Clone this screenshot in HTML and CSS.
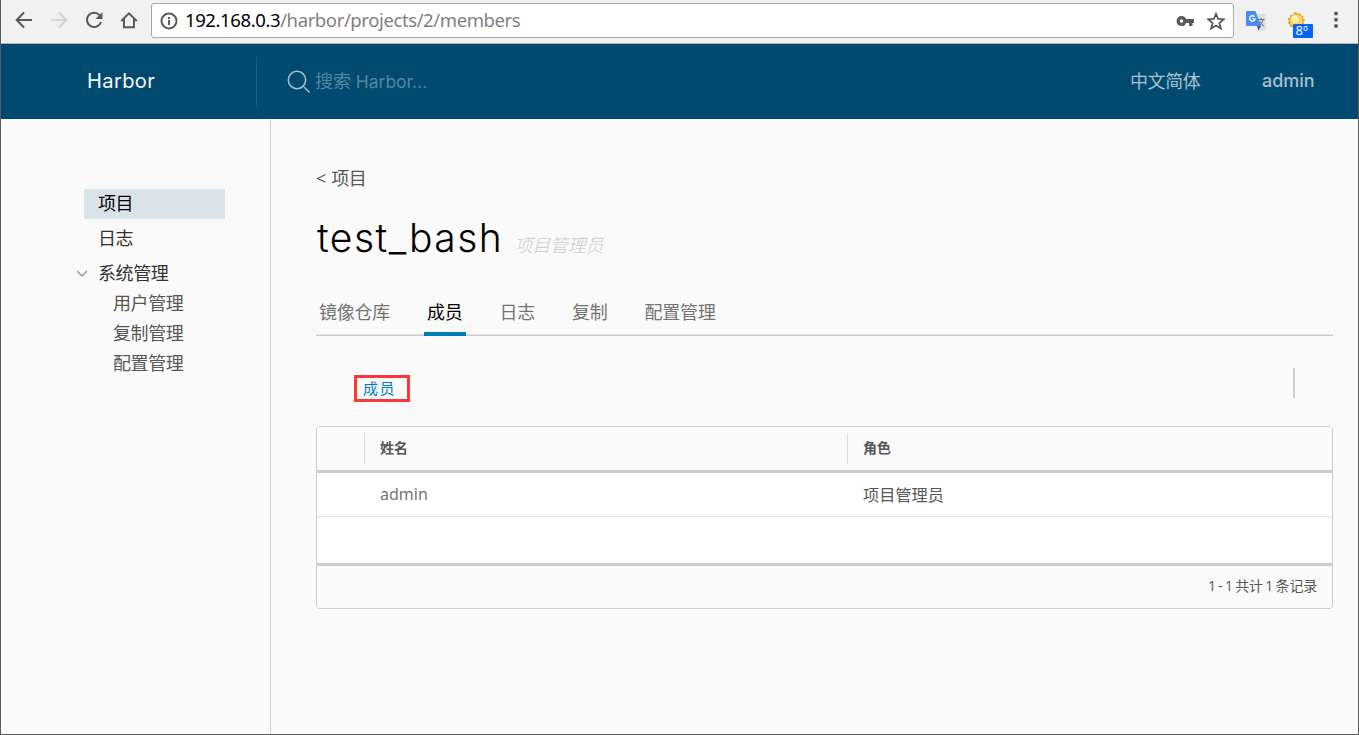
FILE: index.html
```html
<!DOCTYPE html>
<html lang="zh-CN">
<head>
<meta charset="utf-8">
<title>Harbor</title>
<link rel="stylesheet" href="styles.css">
</head>
<body>
<div class="window">
  <div class="toolbar">
    <div class="nav-icons">
      <svg width="18" height="18" viewBox="0 0 18 18" class="icon"><path d="M17 9H2M9 1.500L1.700 9L9 16.500"/></svg>
      <svg width="18" height="18" viewBox="0 0 18 18" class="icon disabled"><path d="M1 9h15M9 1.500L16.300 9L9 16.500"/></svg>
      <svg width="18" height="18" viewBox="0 0 18 18" class="icon"><path d="M14.600 4.200A7.200 7.200 0 1 0 16 11"/><path class="solid" d="M17.500 1v7h-7z"/></svg>
      <svg width="18" height="18" viewBox="0 0 18 18" class="icon"><path d="M1.200 10L9 2.300L16.800 10M4 8v8.200h10V8"/></svg>
    </div>
    <div class="address">
      <svg width="18" height="18" viewBox="0 0 18 18" class="icon info"><circle cx="9" cy="9" r="7.500"/><path d="M9 8v5M9 5v2"/></svg>
      <span class="url"><span class="host">192.168.0.3</span>/harbor/projects/2/members</span>
      <svg width="18" height="12" viewBox="0 0 18 12" class="key"><path fill-rule="evenodd" d="M5.500 1a5 5 0 1 0 4.700 7H13v3h3.500V8H18V4h-7.800A5 5 0 0 0 5.500 1zM5.500 4.300a1.700 1.700 0 1 1 0 3.400a1.700 1.700 0 0 1 0-3.400z"/></svg>
      <svg width="18" height="18" viewBox="0 0 18 18" class="icon star"><path d="M9 1.800l2.100 5.200l5.600.4l-4.300 3.600l1.400 5.500L9 13.500l-4.800 3l1.400-5.500L1.300 7.400l5.600-.4z"/></svg>
    </div>
    <svg width="20" height="21" viewBox="0 0 20 21" class="translate">
      <path d="M9 4h9.500q1 0 1 1v14.500q0 1-1 1H13z" fill="#dedede"/>
      <path d="M12 9.500h6.500M15 8v1.500M17 10q-1 4-4 6M13.500 11q2 4 4.500 5" fill="none" stroke="#5c7485"/>
      <path d="M11 16h4l-2.500 4.500z" fill="#3b51b5"/>
      <path d="M1 1h8.500L15 16H1q-1 0-1-1V2q0-1 1-1z" fill="#4b8bf4"/>
      <path d="M8.400 6.700A2.700 2.700 0 1 0 9 8.900H6.400" fill="none" stroke="#fff" stroke-width="1.400"/>
    </svg>
    <svg width="26" height="27" viewBox="0 0 26 27" class="weather">
      <path d="M9 0l1.500 2L13 1l.8 2.300L16.300 4l-.5 2.300L18 8l-1.500 2l.5 2.500l-2.500.8L13 16l-2.500-.8L8 17l-1.800-1.900L3.600 15L3 12.500L.8 11L2 9L.8 6.600L3 5.500L3.600 3L6 3L7 1z" fill="#e89b25"/>
      <circle cx="9.300" cy="8.700" r="6.400" fill="#ffd65c"/><circle cx="8" cy="7" r="3.700" fill="#fff0a5"/>
      <rect x="6" y="12" width="20" height="14" rx="1" fill="#0563ff"/>
      <text x="8.500" y="23.300">8º</text>
    </svg>
    <svg width="4" height="18" viewBox="0 0 4 18" class="more"><circle cx="2" cy="2.500" r="2"/><circle cx="2" cy="8.700" r="2"/><circle cx="2" cy="15" r="2"/></svg>
  </div>
  <header class="header">
    <div class="brand">Harbor</div>
    <div class="search">
      <svg width="24" height="24" viewBox="0 0 24 24"><circle cx="10" cy="10" r="8.700"/><path d="M17 17l5.500 5.500"/></svg>
      <span class="hint">搜索 <span class="product">Harbor...</span></span>
    </div>
    <div class="language">中文简体</div>
    <div class="user">admin</div>
  </header>
  <div class="body">
    <nav class="sidebar">
      <a class="item active">项目</a>
      <a class="item">日志</a>
      <a class="item group"><svg width="12" height="8" viewBox="0 0 12 8"><path d="M1 1l5 5l5-5"/></svg>系统管理</a>
      <a class="sub">用户管理</a>
      <a class="sub">复制管理</a>
      <a class="sub">配置管理</a>
    </nav>
    <main class="main">
      <a class="back">&lt; 项目</a>
      <div class="title"><h1>test_bash</h1><em>项目管理员</em></div>
      <div class="tabs">
        <a class="tab">镜像仓库</a><a class="tab current">成员</a><a class="tab">日志</a><a class="tab">复制</a><a class="tab">配置管理</a>
      </div>
      <div class="actions"><a class="add">成员</a><i class="divider"></i></div>
      <div class="grid">
        <div class="row head"><span class="cell"></span><span class="cell">姓名</span><span class="cell">角色</span></div>
        <div class="row"><span class="cell"></span><span class="cell name">admin</span><span class="cell">项目管理员</span></div>
        <div class="blank"></div>
        <div class="foot">1 - 1 共计 1 条记录</div>
      </div>
    </main>
  </div>
</div>
</body>
</html>
```
FILE: styles.css
```css
* { box-sizing: border-box; }
body { margin: 0; font-family: "Open Sans", "Noto Sans CJK SC", sans-serif; color: #565656; }
.window { width: 1359px; height: 735px; display: flex; flex-direction: column; overflow: hidden; background: #fafafa; border: 1px solid #5b5b5b; border-top: 0; }

.toolbar { height: 44px; flex: none; display: flex; align-items: flex-start; background: #f1f1f1; border-bottom: 1px solid #b6b4b4; }
.nav-icons { display: flex; gap: 17px; padding: 11px 0 0 14px; width: 150px; flex: none; }
.icon { fill: none; stroke: #5a5a5a; stroke-width: 2; flex: none; }
.icon .solid { fill: #5a5a5a; stroke: none; }
.disabled { stroke: #d4d4d4; }
.address { margin-top: 3px; width: 1083px; height: 35px; flex: none; display: flex; align-items: center; padding: 0 8px; background: #fff; border: 1px solid #a9a9a9; border-radius: 3px; }
.url { flex: 1; margin-left: 7px; padding-bottom: 2px; font: 18.500px/30px "Noto Sans", sans-serif; letter-spacing: -.4px; color: #808080; }
.host { color: #000; }
.key { fill: #5a5a5a; margin-right: 13px; }
.star { stroke-width: 1.800; }
.translate { margin: 10px 0 0 12px; }
.weather { margin: 12px 0 0 21px; }
.weather text { font: 13px "Noto Sans", sans-serif; fill: #fff; }
.more { margin: 11px 0 0 21px; fill: #5a5a5a; }

.header { height: 75px; flex: none; display: flex; align-items: center; background: #004a70; color: #a7c0ce; font-size: 18px; }
.brand { width: 256px; height: 50px; padding-left: 86px; line-height: 48px; font-family: Inter, sans-serif; font-size: 20px; letter-spacing: .4px; color: #fafafa; border-right: 1px solid #1c5e80; }
.search { flex: 1; display: flex; align-items: center; gap: 4px; padding-left: 30px; color: #5386a0; }
.search svg { fill: none; stroke: #a7c0ce; stroke-width: 1.500; }
.hint { padding-bottom: 4px; }
.product { font-family: Inter, sans-serif; font-size: 17.500px; }
.language { width: 132px; padding-bottom: 4px; letter-spacing: -.4px; }
.user { width: 96px; padding-bottom: 2px; font: 500 18px Inter, sans-serif; }

.body { flex: 1; display: flex; }
.sidebar { width: 270px; border-right: 1px solid #ccc; padding: 70px 45px 0 83px; font-size: 18px; letter-spacing: -.4px; display: flex; flex-direction: column; }
.item { height: 30px; line-height: 28px; padding-left: 14px; margin-bottom: 5px; color: #313131; }
.active { background: #d9e4ea; color: #000; border-radius: 3px 0 0 3px; }
.group { line-height: 28px; margin: 0 0 0 -8px; padding: 0 0 2px; display: flex; align-items: center; gap: 10px; }
.group svg { fill: none; stroke: #9a9a9a; stroke-width: 1.500; margin-top: 2px; }
.sub { height: 30px; line-height: 28px; padding-left: 29px; }

.main { flex: 1; padding: 46px 25px 0 45px; font-size: 18px; letter-spacing: -.4px; display: flex; flex-direction: column; }
.back { line-height: 26px; height: 26px; word-spacing: 1px; }
.title { display: flex; align-items: baseline; gap: 11px; height: 54px; margin-top: 20px; padding-left: 1px; }
.title h1 { margin: 0; font: 300 39px/54px Inter, sans-serif; letter-spacing: 1.500px; color: #000; }
.title em { color: #ccc; font-weight: 300; letter-spacing: -.2px; }
.tabs { display: flex; gap: 31px; height: 45px; margin-top: 26px; border-bottom: 1px solid #ccc; box-shadow: inset 0 -1px #e5e5e5; }
.tab { height: 45px; padding: 0 3px; line-height: 43px; color: #737373; letter-spacing: -.25px; }
.current { color: #000; border-bottom: 4px solid #007cbb; }
.actions { display: flex; justify-content: space-between; height: 90px; padding: 32px 38px 0 38px; }
.add { width: 56px; height: 27px; margin-top: 7px; border: 3px solid #f93838; padding-left: 6px; font-size: 15px; line-height: 21px; letter-spacing: 1.500px; color: #007cbb; }
.divider { width: 2px; height: 30px; background: #ccc; }
.grid { border: 1px solid #ccc; border-radius: 4px; overflow: hidden; height: 183px; background: #fff; }
.row { display: grid; grid-template-columns: 48px 483px 1fr; height: 44px; align-items: center; border-bottom: 1px solid #ddd; font-size: 16.200px; letter-spacing: 0; }
.row .cell { padding-bottom: 2px; }
.head { grid-template-columns: 47px 483px 1fr; height: 46px; background: #fafafa; border-bottom: 3px solid #ccc; font-size: 14px; font-weight: 700; }
.row .cell + .cell { padding-left: 15px; }
.head .cell { height: 31px; line-height: 30px; padding-bottom: 0; }
.head .cell + .cell { border-left: 1px solid #ddd; }
.row .name { font-family: "Noto Sans", sans-serif; font-size: 16px; color: #737373; }
.blank { height: 46px; }
.foot { height: 45px; background: #fafafa; border-top: 3px solid #ccc; padding-right: 15px; line-height: 39px; text-align: right; font-size: 14px; letter-spacing: -.2px; word-spacing: -1px; }
```
